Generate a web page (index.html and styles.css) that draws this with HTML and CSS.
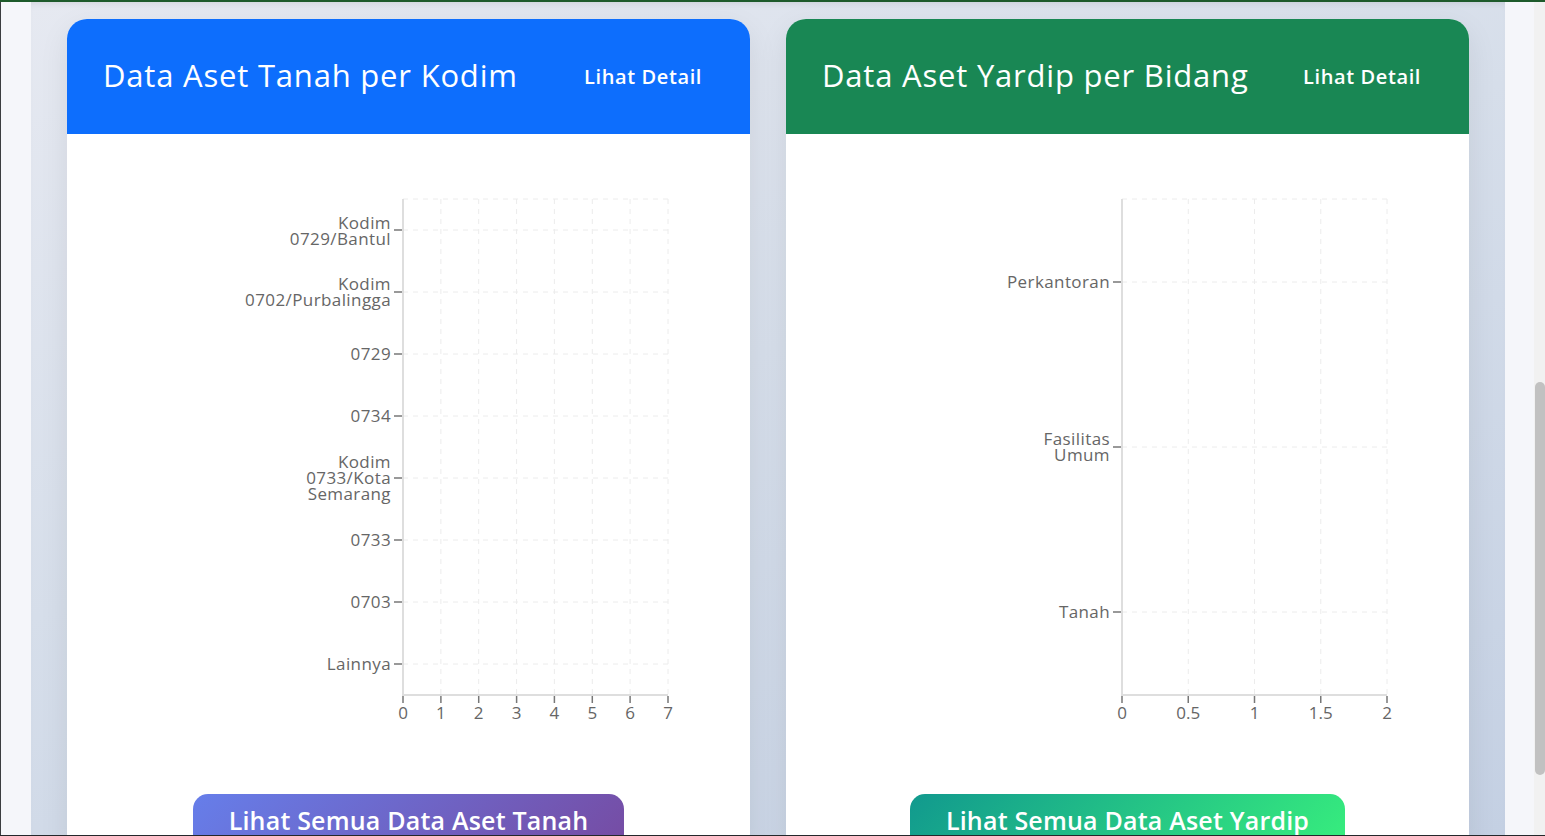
FILE: index.html
```html
<!DOCTYPE html>
<html lang="id">
<head>
<meta charset="utf-8">
<title>Data Aset</title>
<link rel="stylesheet" href="styles.css">
</head>
<body>
<div class="frame">
  <div class="section">
    <div class="card">
      <div class="card-header blue">
        <h2 class="card-title">Data Aset Tanah per Kodim</h2>
        <a class="detail-link" href="#">Lihat Detail</a>
      </div>
      <div class="card-body">
        <svg class="chart" width="683" height="620" viewBox="0 0 683 620">
          <g class="grid">
            <line x1="336" y1="65" x2="601" y2="65"/>
            <line x1="336" y1="96" x2="601" y2="96"/>
            <line x1="336" y1="158" x2="601" y2="158"/>
            <line x1="336" y1="220" x2="601" y2="220"/>
            <line x1="336" y1="282" x2="601" y2="282"/>
            <line x1="336" y1="344" x2="601" y2="344"/>
            <line x1="336" y1="406" x2="601" y2="406"/>
            <line x1="336" y1="468" x2="601" y2="468"/>
            <line x1="336" y1="530" x2="601" y2="530"/>
            <line x1="373.9" y1="65" x2="373.9" y2="561"/>
            <line x1="411.7" y1="65" x2="411.7" y2="561"/>
            <line x1="449.6" y1="65" x2="449.6" y2="561"/>
            <line x1="487.4" y1="65" x2="487.4" y2="561"/>
            <line x1="525.3" y1="65" x2="525.3" y2="561"/>
            <line x1="563.1" y1="65" x2="563.1" y2="561"/>
            <line x1="601" y1="65" x2="601" y2="561"/>
          </g>
          <g class="axis">
            <line x1="336" y1="65" x2="336" y2="561"/>
            <line x1="335" y1="561" x2="601" y2="561"/>
          </g>
          <g class="ticks">
            <line x1="327" y1="96" x2="335" y2="96"/>
            <line x1="327" y1="158" x2="335" y2="158"/>
            <line x1="327" y1="220" x2="335" y2="220"/>
            <line x1="327" y1="282" x2="335" y2="282"/>
            <line x1="327" y1="344" x2="335" y2="344"/>
            <line x1="327" y1="406" x2="335" y2="406"/>
            <line x1="327" y1="468" x2="335" y2="468"/>
            <line x1="327" y1="530" x2="335" y2="530"/>
            <line x1="336" y1="562" x2="336" y2="569"/>
            <line x1="373.9" y1="562" x2="373.9" y2="569"/>
            <line x1="411.7" y1="562" x2="411.7" y2="569"/>
            <line x1="449.6" y1="562" x2="449.6" y2="569"/>
            <line x1="487.4" y1="562" x2="487.4" y2="569"/>
            <line x1="525.3" y1="562" x2="525.3" y2="569"/>
            <line x1="563.1" y1="562" x2="563.1" y2="569"/>
            <line x1="601" y1="562" x2="601" y2="569"/>
          </g>
          <g class="ylabels">
            <text x="324" y="89" dy="0.35em">Kodim<tspan x="324" dy="16">0729/Bantul</tspan></text>
            <text x="324" y="150" dy="0.35em">Kodim<tspan x="324" dy="16">0702/Purbalingga</tspan></text>
            <text x="324" y="220" dy="0.35em">0729</text>
            <text x="324" y="282" dy="0.35em">0734</text>
            <text x="324" y="328" dy="0.35em">Kodim<tspan x="324" dy="16">0733/Kota</tspan><tspan x="324" dy="16">Semarang</tspan></text>
            <text x="324" y="406" dy="0.35em">0733</text>
            <text x="324" y="468" dy="0.35em">0703</text>
            <text x="324" y="530" dy="0.35em">Lainnya</text>
          </g>
          <g class="xlabels">
            <text x="336" y="585">0</text>
            <text x="373.9" y="585">1</text>
            <text x="411.7" y="585">2</text>
            <text x="449.6" y="585">3</text>
            <text x="487.4" y="585">4</text>
            <text x="525.3" y="585">5</text>
            <text x="563.1" y="585">6</text>
            <text x="601" y="585">7</text>
          </g>
        </svg>
        <div class="btn-row">
          <a class="btn-all purple" href="#">Lihat Semua Data Aset Tanah</a>
        </div>
      </div>
    </div>

    <div class="card">
      <div class="card-header green">
        <h2 class="card-title">Data Aset Yardip per Bidang</h2>
        <a class="detail-link" href="#">Lihat Detail</a>
      </div>
      <div class="card-body">
        <svg class="chart" width="682" height="620" viewBox="0 0 682 620">
          <g class="grid">
            <line x1="336" y1="65" x2="601" y2="65"/>
            <line x1="336" y1="148" x2="601" y2="148"/>
            <line x1="336" y1="313" x2="601" y2="313"/>
            <line x1="336" y1="478" x2="601" y2="478"/>
            <line x1="402.25" y1="65" x2="402.25" y2="561"/>
            <line x1="468.5" y1="65" x2="468.5" y2="561"/>
            <line x1="534.75" y1="65" x2="534.75" y2="561"/>
            <line x1="601" y1="65" x2="601" y2="561"/>
          </g>
          <g class="axis">
            <line x1="336" y1="65" x2="336" y2="561"/>
            <line x1="335" y1="561" x2="601" y2="561"/>
          </g>
          <g class="ticks">
            <line x1="327" y1="148" x2="335" y2="148"/>
            <line x1="327" y1="313" x2="335" y2="313"/>
            <line x1="327" y1="478" x2="335" y2="478"/>
            <line x1="336" y1="562" x2="336" y2="569"/>
            <line x1="402.25" y1="562" x2="402.25" y2="569"/>
            <line x1="468.5" y1="562" x2="468.5" y2="569"/>
            <line x1="534.75" y1="562" x2="534.75" y2="569"/>
            <line x1="601" y1="562" x2="601" y2="569"/>
          </g>
          <g class="ylabels">
            <text x="324" y="148" dy="0.35em">Perkantoran</text>
            <text x="324" y="305" dy="0.35em">Fasilitas<tspan x="324" dy="16">Umum</tspan></text>
            <text x="324" y="478" dy="0.35em">Tanah</text>
          </g>
          <g class="xlabels">
            <text x="336" y="585">0</text>
            <text x="402.25" y="585">0.5</text>
            <text x="468.5" y="585">1</text>
            <text x="534.75" y="585">1.5</text>
            <text x="601" y="585">2</text>
          </g>
        </svg>
        <div class="btn-row">
          <a class="btn-all teal" href="#">Lihat Semua Data Aset Yardip</a>
        </div>
      </div>
    </div>
  </div>
</div>
<div class="scrollbar"><div class="thumb"></div></div>
</body>
</html>
```
FILE: styles.css
```css
html, body {
  margin: 0;
  height: 100%;
  overflow: hidden;
}
body {
  box-sizing: border-box;
  display: flex;
  border-top: 2px solid #1d5a2b;
  border-bottom: 1px solid #24272b;
  background: #f1f1f1;
  font-family: "Open Sans", "Noto Sans", sans-serif;
}
.frame {
  flex: 1;
  min-width: 0;
  display: flex;
  border-left: 1px solid #3b3d40;
  background: #f5f6fa;
  padding: 0 29px 0 30px;
}
.section {
  flex: 1;
  display: grid;
  grid-template-columns: 1fr 1fr;
  gap: 36px;
  align-items: start;
  padding: 17px 36px 0;
  background: linear-gradient(160deg, #e6e9f1 0%, #d6deea 45%, #c4d0e3 100%);
  box-shadow: inset 0 6px 8px -6px rgba(0, 0, 0, 0.12);
}
.card {
  background: #fff;
  border-radius: 20px;
  overflow: hidden;
  box-shadow: 0 10px 30px rgba(0, 0, 0, 0.08);
}
.card-header {
  height: 115px;
  display: flex;
  align-items: center;
  justify-content: space-between;
  padding: 0 48px 0 36px;
  color: #fff;
}
.card-header.blue { background: #0d6efd; }
.card-header.green { background: #198754; }
.card-title {
  margin: 0 0 4px;
  font-size: 31px;
  font-weight: 500;
  letter-spacing: 0.8px;
}
.detail-link {
  color: #fff;
  text-decoration: none;
  font-size: 20px;
  font-weight: 600;
  letter-spacing: 0.6px;
}
.card-body {
  display: flex;
  flex-direction: column;
}
.chart {
  display: block;
}
.chart .grid line {
  stroke: #ececec;
  stroke-width: 1;
  stroke-dasharray: 5 5;
}
.chart .axis line {
  stroke: #dedede;
  stroke-width: 2;
}
.chart .ticks line {
  stroke: #777;
  stroke-width: 1.5;
}
.chart text {
  font-family: "Open Sans", "Noto Sans", sans-serif;
  font-size: 17px;
  letter-spacing: 0.4px;
  fill: #666;
}
.chart .ylabels text {
  text-anchor: end;
}
.chart .xlabels text {
  text-anchor: middle;
  letter-spacing: 0;
}
.btn-row {
  display: flex;
  justify-content: center;
  padding-top: 40px;
}
.btn-all {
  display: block;
  padding: 8px 36px 15px;
  border-radius: 15px;
  color: #fff;
  text-decoration: none;
  font-size: 25px;
  font-weight: 600;
  letter-spacing: 0.2px;
  line-height: 36px;
}
.btn-all.purple { background: linear-gradient(135deg, #667eea 0%, #764ba2 100%); }
.btn-all.teal { background: linear-gradient(135deg, #11998e 0%, #38ef7d 100%); }
.scrollbar {
  width: 11px;
  flex: none;
  background: #f1f1f1;
}
.thumb {
  margin: 380px 0 0 1px;
  width: 10px;
  height: 393px;
  border-radius: 5px;
  background: #c1c1c1;
}
```
